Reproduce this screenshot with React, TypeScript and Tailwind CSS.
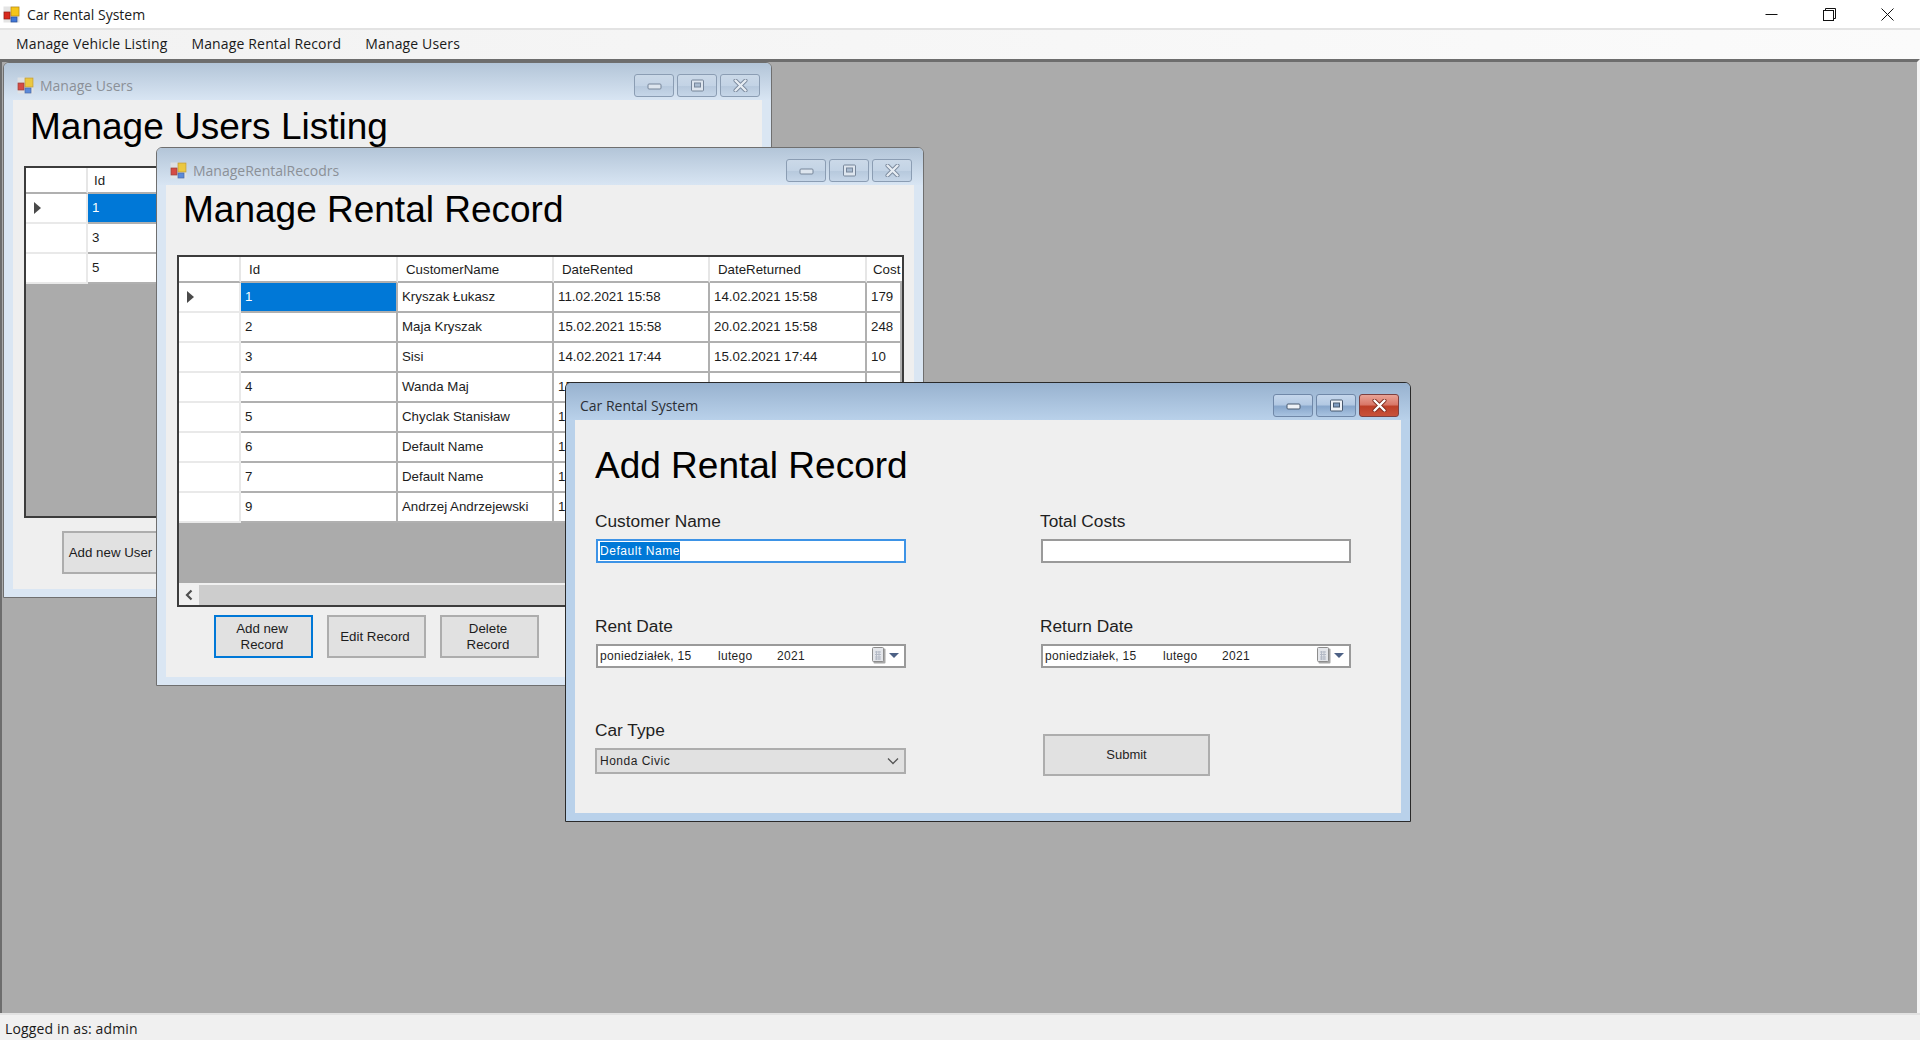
import type { ReactNode } from "react";

//Data
const rentalRows = [
  ["1", "Kryszak Łukasz", "11.02.2021 15:58", "14.02.2021 15:58", "179"],
  ["2", "Maja Kryszak", "15.02.2021 15:58", "20.02.2021 15:58", "248"],
  ["3", "Sisi", "14.02.2021 17:44", "15.02.2021 17:44", "10"],
  ["4", "Wanda Maj", "15.02.2021 15:58", "15.02.2021 15:58", "0"],
  ["5", "Chyclak Stanisław", "15.02.2021 15:58", "15.02.2021 15:58", "0"],
  ["6", "Default Name", "15.02.2021 15:58", "15.02.2021 15:58", "0"],
  ["7", "Default Name", "15.02.2021 15:58", "15.02.2021 15:58", "0"],
  ["9", "Andrzej Andrzejewski", "15.02.2021 15:58", "15.02.2021 15:58", "0"],
];

const userRows = [["1"], ["3"], ["5"]];

//Icons
const AppIcon = ({ faded = false }: { faded?: boolean }) => (
  <svg width="17" height="17" viewBox="0 0 17 17" className={faded ? "shrink-0 opacity-80" : "shrink-0"}>
    <rect x="0.5" y="0.5" width="16" height="16" fill="#e4e4e4" />
    <rect x="8" y="1" width="8" height="9" fill="#f5c518" stroke="#b98a10" strokeWidth="0.7" />
    <rect x="1" y="6" width="6" height="7" fill="#d8281c" stroke="#8e1a12" strokeWidth="0.7" />
    <rect x="8" y="11" width="6" height="5" fill="#3f76d6" stroke="#2a4f96" strokeWidth="0.7" />
  </svg>
);

const CalendarIcon = () => (
  <svg width="14" height="17" viewBox="0 0 14 17" className="shrink-0">
    <rect x="1.5" y="1.5" width="12" height="15" rx="1" fill="#a8a8a8" />
    <rect x="0.5" y="0.5" width="11" height="14" rx="1" fill="#e4e6ea" stroke="#8d8d8d" />
    <path d="M3 5h6M3 7.5h6M3 10h6M3 12h6M4.5 4v9M7 4v9" stroke="#b4bac6" strokeWidth="1" fill="none" />
  </svg>
);

const MinGlyph = ({ active }: { active: boolean }) => (
  <svg width="15" height="8" viewBox="0 0 15 8">
    <rect x="1" y="2" width="13" height="5" rx="1" fill={active ? "#eef2f7" : "#dde5ee"} stroke={active ? "#47586f" : "#77869a"} />
  </svg>
);

const MaxGlyph = ({ active }: { active: boolean }) => (
  <svg width="15" height="13" viewBox="0 0 15 13">
    <rect x="1.5" y="1" width="12" height="11" rx="1" fill={active ? "#eef2f7" : "#dde5ee"} stroke={active ? "#47586f" : "#77869a"} />
    <rect x="4.5" y="4" width="6" height="4" fill={active ? "#7f9cc0" : "#a9bbd0"} stroke={active ? "#47586f" : "#77869a"} />
  </svg>
);

const CloseGlyph = ({ active }: { active: boolean }) => (
  <svg width="15" height="13" viewBox="0 0 15 13">
    <path d="M2.5 1.5 12.5 11.5M12.5 1.5 2.5 11.5" stroke={active ? "#7c2a1c" : "#77869a"} strokeWidth="4" strokeLinecap="round" />
    <path d="M2.5 1.5 12.5 11.5M12.5 1.5 2.5 11.5" stroke={active ? "#ffffff" : "#e6ecf3"} strokeWidth="2.4" strokeLinecap="round" />
  </svg>
);

//Classic caption buttons of a child window
const CaptionButtons = ({ active }: { active: boolean }) => {
  const plain = active
    ? "border-[#7088a8] bg-[linear-gradient(#c5d7ec_0%,#b3c9e3_45%,#88a7cc_55%,#a9c3e0_100%)]"
    : "border-[#8b9db3] bg-[linear-gradient(#cbd9e8_0%,#c3d3e5_50%,#b7c9dd_55%,#c6d6e8_100%)]";
  const close = active
    ? "border-[#7d4040] bg-[linear-gradient(#e9a396_0%,#d9796a_45%,#bd3f28_55%,#c8523a_100%)]"
    : plain;
  const box = "flex h-[23px] w-[40px] items-center justify-center rounded-[3px] border";
  return (
    <div className="mt-[11px] flex gap-[3px] pr-[11px]">
      <div className={`${box} ${plain}`}>
        <MinGlyph active={active} />
      </div>
      <div className={`${box} ${plain}`}>
        <MaxGlyph active={active} />
      </div>
      <div className={`${box} ${close}`}>
        <CloseGlyph active={active} />
      </div>
    </div>
  );
};

interface ChildWindowProps {
  title: string;
  place: string;
  active?: boolean;
  icon?: boolean;
  children: ReactNode;
}

const ChildWindow = ({ title, place, active = false, icon = true, children }: ChildWindowProps) => (
  <div
    className={`absolute flex flex-col rounded-t-[6px] border ${place} ${
      active ? "border-[#2a2a2a] bg-[#b9d1ea]" : "border-[#6f6f6f] bg-[#dae6f3]"
    }`}
  >
    <div
      className={`flex h-[37px] shrink-0 justify-between rounded-t-[5px] ${
        active
          ? "bg-[linear-gradient(#98b2cf,#b9d1ea)]"
          : "bg-[linear-gradient(#b3c5d8,#d8e5f3)]"
      }`}
    >
      <div className={`flex items-center gap-[6px] pt-[7px] ${icon ? "pl-[13px]" : "pl-[14px]"}`}>
        {icon && <AppIcon faded />}
        <span className={`font-['Open_Sans',sans-serif] text-[14px] ${active ? "text-[#2b2f36]" : "text-[#8b9097]"}`}>
          {title}
        </span>
      </div>
      <CaptionButtons active={active} />
    </div>
    <div className="flex min-h-0 flex-1 px-[9px] pb-[8px]">
      <div className="min-h-0 flex-1 overflow-hidden bg-[#efefef]">{children}</div>
    </div>
  </div>
);

interface DataGridProps {
  columns: string[];
  rows: string[][];
  template: string;
  scrollbar?: boolean;
}

const DataGrid = ({ columns, rows, template, scrollbar = false }: DataGridProps) => (
  <div className="flex h-[352px] w-[727px] flex-col overflow-hidden border-2 border-[#3c3c3c] bg-[#ababab] font-['Liberation_Sans',sans-serif] text-[13.3px] text-[#1c1c1c]">
    <div className={`grid h-[26px] shrink-0 bg-white ${template}`}>
      <div className="border-r-2 border-b-2 border-r-[#e6e6e6] border-b-[#b0b0b0]" />
      {columns.map((col) => (
        <div key={col} className="flex items-center overflow-hidden border-r-2 border-b-2 border-r-[#e6e6e6] border-b-[#b0b0b0] pt-[2px] pl-[8px] whitespace-nowrap first:pl-[9px] last:border-r-0 last:pl-[6px]">
          {col}
        </div>
      ))}
    </div>
    {rows.map((row, rowIndex) => (
      <div key={row[0]} className={`grid h-[30px] shrink-0 ${template}`}>
        <div className="relative flex items-center border-r-2 border-b-2 border-[#e9e9e9] bg-white pl-[8px]">
          {rowIndex === 0 && <div className="h-0 w-0 border-y-[6px] border-l-[7px] border-y-transparent border-l-[#4a4a4a]" />}
        </div>
        {row.map((cell, cellIndex) => (
          <div
            key={cellIndex}
            className={`flex items-center overflow-hidden border-r-2 border-b-2 border-[#b0b0b0] pl-[4px] whitespace-nowrap ${
              rowIndex === 0 && cellIndex === 0 ? "bg-[#0078d7] text-white" : "bg-white"
            }`}
          >
            {cell}
          </div>
        ))}
      </div>
    ))}
    <div className="flex-1" />
    {scrollbar && (
      <div className="flex h-[22px] shrink-0 border-t-2 border-[#f0f0f0] bg-[#cdcdcd]">
        <div className="flex w-[20px] items-center justify-center bg-[#f0f0f0]">
          <svg width="8" height="12" viewBox="0 0 8 12">
            <path d="M6.5 1.5 2 6l4.5 4.5" fill="none" stroke="#505050" strokeWidth="2.2" />
          </svg>
        </div>
      </div>
    )}
  </div>
);

const FormButton = ({ children, focused = false, place }: { children: ReactNode; focused?: boolean; place: string }) => (
  <div
    className={`flex shrink-0 items-center justify-center border-2 bg-[#e1e1e1] pr-[3px] text-center font-['Liberation_Sans',sans-serif] text-[13.3px] leading-4 text-[#1c1c1c] ${place} ${
      focused ? "border-[#0078d7]" : "border-[#adadad]"
    }`}
  >
    {children}
  </div>
);

const FieldLabel = ({ children }: { children: ReactNode }) => (
  <div className="mb-[8px] h-5 text-[17.3px] leading-5 text-[#1f1f1f]">{children}</div>
);

const DatePicker = () => (
  <div className="ml-px flex h-[24px] w-[310px] items-center border-2 border-[#9a9a9a] bg-white pr-[5px] pb-px pl-[2px] text-[12px] tracking-[0.3px] text-[#1f1f1f]">
    <span className="w-[118px]">poniedziałek, 15</span>
    <span className="w-[59px]">lutego</span>
    <span className="flex-1">2021</span>
    <CalendarIcon />
    <div className="ml-[3px] h-0 w-0 border-x-[5px] border-t-[5px] border-x-transparent border-t-[#4d6185]" />
  </div>
);

const AddRecordForm = () => (
  <div className="pt-[24px] pl-5 font-['Liberation_Sans',sans-serif]">
    <h1 className="mb-[23px] text-[37px] leading-[44px] text-black">Add Rental Record</h1>
    <div className="grid grid-cols-[445px_1fr] gap-y-[53px]">
      <div>
        <FieldLabel>Customer Name</FieldLabel>
        <div className="ml-px flex h-[24px] w-[310px] items-center border-2 border-[#3d93e6] bg-white pl-[2px] text-[12px] tracking-[0.55px]">
          <span className="bg-[#0078d7] text-white">Default Name</span>
        </div>
      </div>
      <div>
        <FieldLabel>Total Costs</FieldLabel>
        <div className="ml-px h-[24px] w-[310px] border-2 border-[#9a9a9a] bg-white" />
      </div>
      <div>
        <FieldLabel>Rent Date</FieldLabel>
        <DatePicker />
      </div>
      <div>
        <FieldLabel>Return Date</FieldLabel>
        <DatePicker />
      </div>
      <div className="-mt-px">
        <FieldLabel>Car Type</FieldLabel>
        <div className="flex h-[26px] w-[311px] items-center justify-between border-2 border-[#adadad] bg-[#e1e1e1] pr-[5px] pl-[3px] text-[12px] tracking-[0.5px] text-[#1f1f1f]">
          Honda Civic
          <svg width="12" height="8" viewBox="0 0 12 8">
            <path d="M1 1.5 6 6.5l5-5" fill="none" stroke="#555" strokeWidth="1.3" />
          </svg>
        </div>
      </div>
      <div className="pt-[13px] pl-[3px]">
        <div className="flex h-[42px] w-[167px] items-center justify-center border-2 border-[#adadad] bg-[#e1e1e1] text-[13px] text-[#1f1f1f]">
          Submit
        </div>
      </div>
    </div>
  </div>
);

export default function App() {
  return (
    <div className="flex h-[1040px] w-[1920px] flex-col overflow-hidden bg-white font-['Open_Sans',sans-serif] text-[14px] text-[#1a1a1a]">
      {/* Window title bar */}
      <div className="flex h-[30px] shrink-0 items-center justify-between border-b-2 border-[#e3e3e3] pl-[3px]">
        <div className="flex items-center gap-[7px]">
          <AppIcon />
          <span>Car Rental System</span>
        </div>
        <div className="flex pr-[4px]">
          <div className="flex w-[58px] justify-center">
            <svg width="13" height="13" viewBox="0 0 13 13">
              <path d="M0.5 6.5h12" stroke="#111" strokeWidth="1" />
            </svg>
          </div>
          <div className="flex w-[58px] justify-center">
            <svg width="13" height="13" viewBox="0 0 13 13">
              <rect x="0.5" y="2.5" width="10" height="10" fill="none" stroke="#111" />
              <path d="M2.5 2.5v-2h10v10h-2" fill="none" stroke="#111" />
            </svg>
          </div>
          <div className="flex w-[58px] justify-center">
            <svg width="13" height="13" viewBox="0 0 13 13">
              <path d="M0.5 0.5 12.5 12.5M12.5 0.5 0.5 12.5" stroke="#111" strokeWidth="1" />
            </svg>
          </div>
        </div>
      </div>

      {/* Menu */}
      <div className="flex h-[29px] shrink-0 items-center gap-[24px] bg-[linear-gradient(90deg,#f2f2f2,#fbfbfb)] pb-[2px] pl-[16px] tracking-[0.15px]">
        <span>Manage Vehicle Listing</span>
        <span>Manage Rental Record</span>
        <span>Manage Users</span>
      </div>

      {/* MDI area */}
      <div className="relative min-h-0 flex-1 border-t-[3px] border-r-[3px] border-l-2 border-t-[#6d6d6d] border-r-[#f4f4f4] border-l-[#6d6d6d] bg-[#ababab]">
        <ChildWindow title="Manage Users" place="left-px top-0 h-[536px] w-[769px]">
          <div className="pt-[5px] pl-[17px] font-['Liberation_Sans',sans-serif]">
            <h1 className="text-[37px] leading-[44px] text-black">Manage Users Listing</h1>
          </div>
          <div className="mt-[17px] ml-[11px]">
            <DataGrid columns={["Id"]} rows={userRows} template="grid-cols-[62px_665px]" />
            <FormButton place="mt-[13px] ml-[38px] h-[43px] w-[100px]">Add new User</FormButton>
          </div>
        </ChildWindow>

        <ChildWindow title="ManageRentalRecodrs" place="left-[154px] top-[85px] h-[539px] w-[768px]">
          <div className="pt-[3px] pl-[17px] font-['Liberation_Sans',sans-serif]">
            <h1 className="text-[37px] leading-[44px] text-black">Manage Rental Record</h1>
          </div>
          <div className="mt-[23px] ml-[11px]">
            <DataGrid
              columns={["Id", "CustomerName", "DateRented", "DateReturned", "Cost"]}
              rows={rentalRows}
              template="grid-cols-[62px_157px_156px_156px_157px_35px]"
              scrollbar
            />
            <div className="mt-[8px] ml-[37px] flex gap-[14px]">
              <FormButton focused place="h-[43px] w-[99px]">
                Add new
                <br />
                Record
              </FormButton>
              <FormButton place="h-[43px] w-[99px]">Edit Record</FormButton>
              <FormButton place="h-[43px] w-[99px]">
                Delete
                <br />
                Record
              </FormButton>
            </div>
          </div>
        </ChildWindow>

        <ChildWindow title="Car Rental System" active icon={false} place="left-[563px] top-[320px] h-[440px] w-[846px]">
          <AddRecordForm />
        </ChildWindow>
      </div>

      {/* Status bar */}
      <div className="flex h-[27px] shrink-0 items-center border-t-2 border-[#e2e2e2] bg-[#f0f0f0] pt-px pl-[5px] tracking-[0.15px]">
        Logged in as: admin
      </div>
    </div>
  );
}
